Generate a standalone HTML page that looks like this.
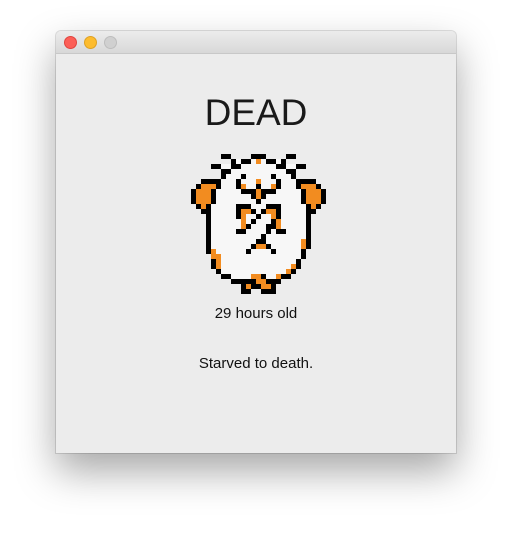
<!DOCTYPE html>
<html><head><style>
html,body{margin:0;padding:0;width:512px;height:534px;background:#fff;overflow:hidden;font-family:"Liberation Sans",sans-serif;}
.win{position:absolute;left:56px;top:31px;width:400px;height:422px;background:#ececec;border-radius:5px 5px 0 0;box-shadow:0 18px 40px rgba(0,0,0,0.35),0 0 0 1px rgba(0,0,0,0.12);overflow:hidden;}
.bar{position:absolute;left:0;top:0;width:400px;height:22px;background:linear-gradient(#ececec,#d8d8d8);border-bottom:1px solid #c8c8c8;}
.l{position:absolute;top:5px;width:11px;height:11px;border-radius:50%;}
.t{position:absolute;left:0;width:400px;text-align:center;color:#111;}
</style></head><body>
<div class="win">
<div class="bar">
<div class="l" style="left:8px;background:#fc5f57;border:0.5px solid #e0443e"></div>
<div class="l" style="left:28px;background:#fdbc2e;border:0.5px solid #dea123"></div>
<div class="l" style="left:48px;background:#d0d0d0;border:0.5px solid #bdbdbd"></div>
</div>
<div class="t" style="top:60px;font-size:37px;line-height:44px;color:#1a1a1a;">DEAD</div>
<div class="t" style="top:274px;font-size:15px;line-height:18px;">29 hours old</div>
<div class="t" style="top:324px;font-size:15px;line-height:18px;">Starved to death.</div>
</div>
<svg style="position:absolute;left:190.7px;top:154px" width="140" height="140" viewBox="0 0 28 28" shape-rendering="crispEdges">
<g fill="#f7f7f7">
<rect x="9" y="1" width="9" height="1"/><rect x="6" y="2" width="15" height="1"/><rect x="8" y="3" width="11" height="1"/>
<rect x="7" y="4" width="13" height="1"/><rect x="6" y="5" width="15" height="2"/><rect x="5" y="7" width="17" height="3"/>
<rect x="4" y="10" width="19" height="9"/><rect x="4" y="19" width="18" height="2"/><rect x="5" y="21" width="16" height="2"/>
<rect x="6" y="23" width="14" height="1"/><rect x="8" y="24" width="10" height="1"/>
</g>
<g fill="#000">
<rect x="6" y="0" width="2" height="1"/><rect x="12" y="0" width="3" height="1"/><rect x="19" y="0" width="2" height="1"/>
<rect x="8" y="1" width="1" height="1"/><rect x="10" y="1" width="2" height="1"/><rect x="15" y="1" width="2" height="1"/><rect x="18" y="1" width="1" height="1"/>
<rect x="4" y="2" width="2" height="1"/><rect x="8" y="2" width="2" height="1"/><rect x="17" y="2" width="2" height="1"/><rect x="21" y="2" width="2" height="1"/>
<rect x="6" y="3" width="2" height="1"/><rect x="19" y="3" width="2" height="1"/>
<rect x="6" y="4" width="1" height="1"/><rect x="10" y="4" width="1" height="1"/><rect x="16" y="4" width="1" height="1"/><rect x="20" y="4" width="1" height="1"/>
<rect x="2" y="5" width="4" height="1"/><rect x="9" y="5" width="1" height="1"/><rect x="17" y="5" width="1" height="1"/><rect x="21" y="5" width="4" height="1"/>
<rect x="1" y="6" width="1" height="1"/><rect x="5" y="6" width="1" height="1"/><rect x="9" y="6" width="1" height="1"/><rect x="13" y="6" width="1" height="1"/><rect x="17" y="6" width="1" height="1"/><rect x="21" y="6" width="1" height="1"/><rect x="25" y="6" width="1" height="1"/>
<rect x="0" y="7" width="1" height="3"/><rect x="4" y="7" width="1" height="3"/><rect x="22" y="7" width="1" height="3"/><rect x="26" y="7" width="1" height="3"/>
<rect x="10" y="7" width="3" height="1"/><rect x="14" y="7" width="3" height="1"/>
<rect x="12" y="8" width="1" height="1"/><rect x="14" y="8" width="1" height="1"/><rect x="13" y="9" width="1" height="1"/>
<rect x="1" y="10" width="1" height="1"/><rect x="3" y="10" width="1" height="1"/><rect x="9" y="10" width="3" height="1"/><rect x="15" y="10" width="3" height="1"/><rect x="23" y="10" width="1" height="1"/><rect x="25" y="10" width="1" height="1"/>
<rect x="2" y="11" width="2" height="1"/><rect x="9" y="11" width="1" height="1"/><rect x="12" y="11" width="1" height="1"/><rect x="14" y="11" width="1" height="1"/><rect x="17" y="11" width="1" height="1"/><rect x="23" y="11" width="2" height="1"/>
<rect x="3" y="12" width="1" height="8"/><rect x="23" y="12" width="1" height="7"/>
<rect x="9" y="12" width="1" height="1"/><rect x="13" y="12" width="1" height="1"/><rect x="17" y="12" width="1" height="1"/>
<rect x="12" y="13" width="1" height="1"/><rect x="16" y="13" width="1" height="1"/>
<rect x="11" y="14" width="1" height="1"/><rect x="15" y="14" width="2" height="1"/>
<rect x="9" y="15" width="2" height="1"/><rect x="15" y="15" width="1" height="1"/><rect x="17" y="15" width="2" height="1"/>
<rect x="14" y="16" width="1" height="1"/><rect x="13" y="17" width="2" height="1"/>
<rect x="12" y="18" width="1" height="1"/><rect x="15" y="18" width="1" height="1"/>
<rect x="11" y="19" width="1" height="1"/><rect x="16" y="19" width="1" height="1"/><rect x="22" y="19" width="1" height="2"/>
<rect x="4" y="21" width="1" height="2"/><rect x="21" y="21" width="1" height="2"/>
<rect x="5" y="23" width="1" height="1"/><rect x="20" y="23" width="1" height="1"/>
<rect x="6" y="24" width="2" height="1"/><rect x="14" y="24" width="1" height="1"/><rect x="18" y="24" width="2" height="1"/>
<rect x="8" y="25" width="5" height="1"/><rect x="15" y="25" width="3" height="1"/>
<rect x="10" y="26" width="1" height="1"/><rect x="12" y="26" width="2" height="1"/><rect x="16" y="26" width="1" height="1"/>
<rect x="10" y="27" width="2" height="1"/><rect x="14" y="27" width="3" height="1"/>
</g>
<g fill="#f28c20">
<rect x="13" y="1" width="1" height="1"/><rect x="13" y="5" width="1" height="1"/>
<rect x="2" y="6" width="3" height="1"/><rect x="10" y="6" width="1" height="1"/><rect x="16" y="6" width="1" height="1"/><rect x="22" y="6" width="3" height="1"/>
<rect x="1" y="7" width="3" height="3"/><rect x="23" y="7" width="3" height="3"/><rect x="13" y="7" width="1" height="2"/>
<rect x="2" y="10" width="1" height="1"/><rect x="24" y="10" width="1" height="1"/>
<rect x="10" y="11" width="2" height="1"/><rect x="15" y="11" width="2" height="1"/>
<rect x="10" y="12" width="1" height="3"/><rect x="16" y="12" width="1" height="1"/><rect x="17" y="13" width="1" height="2"/>
<rect x="22" y="17" width="1" height="2"/><rect x="13" y="18" width="2" height="1"/>
<rect x="4" y="19" width="1" height="1"/><rect x="4" y="20" width="2" height="1"/><rect x="5" y="21" width="1" height="2"/>
<rect x="20" y="22" width="1" height="1"/><rect x="19" y="23" width="1" height="1"/>
<rect x="12" y="24" width="2" height="1"/><rect x="17" y="24" width="1" height="1"/>
<rect x="13" y="25" width="2" height="1"/><rect x="11" y="26" width="1" height="1"/><rect x="14" y="26" width="2" height="1"/>
</g>
</svg>
</body></html>
